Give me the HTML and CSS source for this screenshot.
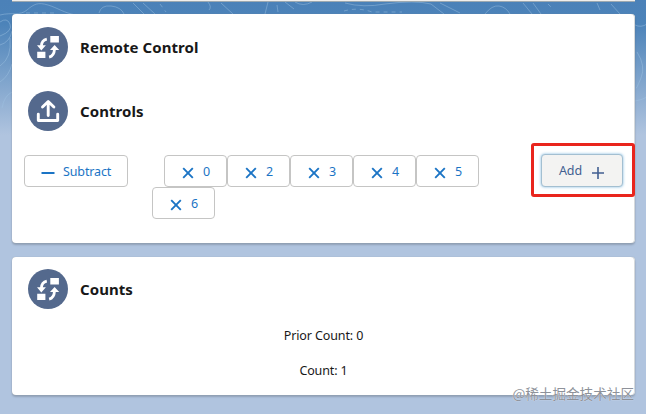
FILE: index.html
```
<!DOCTYPE html>
<html lang="en">
<head>
<meta charset="utf-8">
<title>Remote Control</title>
<link rel="stylesheet" href="styles.css">
</head>
<body>
<svg class="symbols" aria-hidden="true">
  <symbol id="swap" viewBox="0 0 40 40">
    <path fill="#fff" d="M22.3 9h8.600v6.500h-8.600zM9.200 24.800h8.200v6.200H9.200z"/>
    <path fill="none" stroke="#fff" stroke-width="2.800" d="M18.800 12.100q-5.200 1-5.400 7M21.100 30.100q5-1.200 5.400-8"/>
    <path fill="#fff" d="M9 18.200h8.900l-4.600 5.200zM22 22.900h9.200l-4.600-5z"/>
  </symbol>
  <symbol id="share" viewBox="0 0 40 40">
    <path fill="none" stroke="#fff" stroke-width="2.900" stroke-linecap="round" stroke-linejoin="round" d="M14.500 16l5.700-5.500 5.700 5.500M20.200 11v13.500M10.300 23.200v6.300h19.400v-6.300"/>
  </symbol>
  <symbol id="times" viewBox="0 0 12 12"><path fill="none" stroke="currentColor" stroke-width="1.900" d="M1.200 1.200l9.600 9.600M10.800 1.200l-9.600 9.600"/></symbol>
</svg>
<svg class="topography" viewBox="0 0 646 150" aria-hidden="true">
  <g fill="none" stroke="#9fc4e2" stroke-opacity=".45" stroke-width="1">
    <path d="M0 15C12 12 20 16 27 10S38 2 48 5s16 8 28 10"/>
    <path d="M0 22q7-5 10 2t-10 12M0 45q10-3 12-14M0 66q12-8 10-28M0 82q9-6 12-18M2 108q2-12 10-16"/>
    <path d="M99 13q2-8 12-7t13 8M133 3l11 11M143 3l12 11M208 2q4 5 1 8M221 3l12 11M268 2l-3 12M277 5l1 7M295 2q8 5 17 0M285 2l9 7"/>
    <path d="M345 3q18 5 40 1 30-4 46 0l13 10M440 3l20 10M485 14q7-9 14-8t11 8M523 3l9 11M533 3l8 11M597 3l3 7M611 4l9 10"/>
    <path stroke-dasharray="4 4" d="M26 13h30M344 11q14-4 28 1h30M548 4l5 5M160 4l6 8"/>
    <path d="M635 25q6 3 12-1M637 52q9 14 4 26t-5 10M635 101q7-1 12-4"/>
  </g>
</svg>
<main class="page">
  <div class="previous"></div>
  <section class="card remote">
    <header class="head"><span class="badge"><svg><use href="#swap"/></svg></span><h2>Remote Control</h2></header>
    <header class="head second"><span class="badge"><svg><use href="#share"/></svg></span><h2>Controls</h2></header>
    <div class="controls">
      <button class="btn subtract"><svg class="minus" viewBox="0 0 14 4"><path d="M.5 2h13" stroke="currentColor" stroke-width="2"/></svg><span>Subtract</span></button>
      <div class="multiply">
        <button class="btn factor first"><svg><use href="#times"/></svg><span>0</span></button><button class="btn factor"><svg><use href="#times"/></svg><span>2</span></button><button class="btn factor"><svg><use href="#times"/></svg><span>3</span></button><button class="btn factor"><svg><use href="#times"/></svg><span>4</span></button><button class="btn factor"><svg><use href="#times"/></svg><span>5</span></button><button class="btn factor"><svg><use href="#times"/></svg><span>6</span></button>
      </div>
      <div class="highlight"><button class="btn add"><span>Add</span><svg class="plus" viewBox="0 0 12 12"><path d="M6 0v12M0 6h12" stroke="currentColor" stroke-width="1.600"/></svg></button></div>
    </div>
  </section>
  <section class="card counts">
    <header class="head"><span class="badge"><svg><use href="#swap"/></svg></span><h2>Counts</h2></header>
    <p class="prior">Prior Count: 0</p>
    <p class="count">Count: 1</p>
  </section>
</main>
<div class="watermark">@稀土掘金技术社区</div>
</body>
</html>
```
FILE: styles.css
```
* { box-sizing: border-box; }
body {
  margin: 0;
  height: 414px;
  overflow: hidden;
  position: relative;
  background: linear-gradient(#4b81b8 0, #4c83b9 24px, #b0c4df 135px);
  font-family: "Noto Sans", "Open Sans", sans-serif;
  font-size: 12.5px;
  color: #181818;
}
.symbols { position: absolute; width: 0; height: 0; }
.topography { position: absolute; inset: 0 auto auto 0; width: 646px; height: 150px; }
.page { position: relative; padding: 0 11px 0 12px; }
.previous {
  height: 2px;
  margin-bottom: 12px;
  background: #f0eeec;
  border-bottom: 1px solid #9ca8b0;
}
.card {
  background: #fff;
  border-radius: 4px;
  box-shadow: inset -1px 0 0 #d5d9dc, 0 0 1px rgba(150, 150, 145, .7), 0 2px 2px rgba(0, 0, 0, .18);
}
.remote { height: 229px; padding-top: 13px; }
.counts { height: 138px; margin-top: 14px; padding-top: 12px; }
.head { display: flex; align-items: center; height: 40px; padding-left: 16px; gap: 12px; }
.second { margin-top: 24px; }
.badge { width: 40px; height: 40px; border-radius: 50%; background: #54698d; }
.badge svg { display: block; width: 40px; height: 40px; }
h2 { margin: 0; font-size: 15px; line-height: 20px; font-weight: 700; letter-spacing: .06px; }
.controls { display: flex; height: 64px; margin-top: 24px; padding: 0 0 0 12px; }
.btn {
  display: inline-flex;
  align-items: center;
  height: 32px;
  padding: 0;
  border: 1px solid #c5c5c4;
  border-radius: 4px;
  background: #fff;
  color: #1b74c5;
  font: inherit;
  line-height: 30px;
}
.btn span { padding-top: 1px; letter-spacing: -.12px; }
.subtract { width: 104px; padding-left: 16px; gap: 8px; }
.minus { width: 14px; height: 4px; margin-top: 4px; }
.multiply { display: flex; flex-wrap: wrap; align-content: flex-start; width: 340px; margin-left: 24px; }
.factor { width: 63px; padding-left: 17px; gap: 9px; }
.factor svg { width: 12px; height: 12px; margin-top: 4px; }
.first { margin-left: 12px; }
.highlight {
  width: 104px;
  height: 54px;
  margin: -12px 0 0 39px;
  padding: 8px 7px;
  border: 3px solid #e9251d;
  border-radius: 3px;
}
.add {
  width: 82px;
  height: 33px;
  padding-left: 17px;
  gap: 10px;
  background: #f3f3f2;
  border-color: #a3bfd1;
  box-shadow: 0 0 3px #7fb9df;
  color: #425f91;
}
.plus { width: 12px; height: 12px; margin-top: 4px; }
p { margin: 0; text-align: center; line-height: 20px; letter-spacing: -.12px; }
.prior { margin-top: 17px; }
.count { margin-top: 15px; }
.watermark {
  position: absolute;
  right: 12px;
  top: 383px;
  font: 13.6px/20px "Noto Sans CJK SC", sans-serif;
  color: #8e929a;
  text-shadow: 0 0 1px #fff;
  white-space: nowrap;
}
```
